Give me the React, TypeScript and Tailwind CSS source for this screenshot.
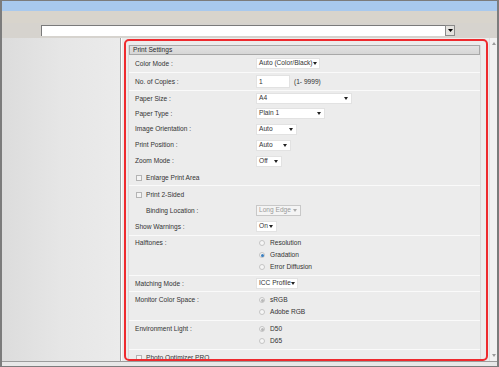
import React from "react";

const Arrow = ({ c = "#222" }: { c?: string }) => (
  <svg width="4" height="3" viewBox="0 0 4 3" className="shrink-0">
    <path d="M0 0h4L2 3z" fill={c} />
  </svg>
);

function Select({ cls, text, disabled }: { cls: string; text: string; disabled?: boolean }) {
  return (
    <div
      className={`${cls} h-[11px] flex items-center justify-between pl-[2px] pr-[3px] whitespace-nowrap ${
        disabled ? "bg-[#f4f4f4] border border-[#c8c8c8] text-[#9a9a9a]" : "bg-white border border-[#e2e2e2] text-[#333]"
      }`}
    >
      <span className="leading-none">{text}</span>
      <Arrow c={disabled ? "#aaa" : "#222"} />
    </div>
  );
}

function Radio({ checked, disabled }: { checked?: boolean; disabled?: boolean }) {
  return (
    <div className="w-[6px] h-[6px] rounded-full border border-[#c4c4c4] bg-[#f6f6f6] flex items-center justify-center">
      {checked && <div className={`w-[3px] h-[3px] rounded-full ${disabled ? "bg-[#b8b8b8]" : "bg-[#3a7fc0]"}`} />}
    </div>
  );
}

function RadioItem({ label, checked, disabled }: { label: string; checked?: boolean; disabled?: boolean }) {
  return (
    <div className="flex items-center h-[12px] gap-[2px] pl-[3px] whitespace-nowrap">
      <Radio checked={checked} disabled={disabled} />
      <span className="ml-[3px]">{label}</span>
    </div>
  );
}

const Check = () => <div className="w-[6px] h-[6px] border border-[#b4b4b4] bg-[#f4f4f4]" />;

const Sep = () => <div className="h-px bg-[#fafafa]" />;

function Row({ h, label, children, indent }: { h: string; label: string; children?: React.ReactNode; indent?: boolean }) {
  return (
    <div className={`flex items-center ${h} pl-[6px] whitespace-nowrap`}>
      <div className={`w-[121px] ${indent ? "pl-[11px]" : ""}`}>{label}</div>
      {children}
    </div>
  );
}

export default function App() {
  return (
    <div className="w-[499px] h-[367px] overflow-hidden bg-[#d6d3ce] border-l-2 border-r-2 border-t border-b border-[#7c7c7c] flex flex-col font-['Liberation_Sans',Arial,sans-serif] text-[6.6px] text-[#333]">
      <div className="h-[10px] bg-[#a8c9ee] shrink-0" />
      <div className="h-[12px] bg-[#d8d4cc] shrink-0" />
      <div className="h-[15px] shrink-0 flex items-start pt-[2px]">
        <div className="w-[39px]" />
        <div className="h-[11px] w-[404px] bg-white border-l border-t border-[#7a7a7a]" />
        <div className="h-[11px] w-[10px] bg-[#e4e2de] border border-[#8a8a8a] flex items-center justify-center">
          <svg width="5" height="3" viewBox="0 0 5 3">
            <path d="M0 0h5L2.5 3z" fill="#000" />
          </svg>
        </div>
      </div>
      <div className="h-[323px] shrink-0 flex">
        <div className="w-[119px] bg-gradient-to-r from-[#dcdcdc] via-[#e6e6e6] to-[#ebebeb] border-r border-[#a4a4a4]" />
        <div className="flex-1 relative bg-[#ececec] border-l border-white overflow-hidden pt-[7px] pl-[6px] pr-[5px]">
          <div className="w-[353px] border-l border-r border-[#dadada] bg-[#ececec]">
            <div className="h-[10px] bg-gradient-to-b from-[#e2e2e2] to-[#d6d6d6] border border-[#a8a8a8] flex items-center pl-[3px] text-[#2a2a2a]">
              Print Settings
            </div>
            <Row h="h-[17px]" label="Color Mode :">
              <Select cls="w-[64px]" text="Auto (Color/Black)" />
            </Row>
            <Sep />
            <Row h="h-[17px]" label="No. of Copies :">
              <div className="w-[34px] h-[13px] bg-white border border-[#e2e2e2] flex items-center pl-[2px]">1</div>
              <span className="ml-[4px]">(1- 9999)</span>
            </Row>
            <Sep />
            <Row h="h-[15px]" label="Paper Size :">
              <Select cls="w-[96px]" text="A4" />
            </Row>
            <Row h="h-[15px]" label="Paper Type :">
              <Select cls="w-[69px]" text="Plain 1" />
            </Row>
            <Row h="h-[16px]" label="Image Orientation :">
              <Select cls="w-[41px]" text="Auto" />
            </Row>
            <Row h="h-[16px]" label="Print Position :">
              <Select cls="w-[35px]" text="Auto" />
            </Row>
            <Row h="h-[16px]" label="Zoom Mode :">
              <Select cls="w-[26px]" text="Off" />
            </Row>
            <div className="flex items-center h-[16px] pl-[7px] pt-[2px] whitespace-nowrap">
              <Check />
              <span className="ml-[4px]">Enlarge Print Area</span>
            </div>
            <Sep />
            <div className="flex items-center h-[17px] pl-[7px] pt-[1px] whitespace-nowrap">
              <Check />
              <span className="ml-[4px]">Print 2-Sided</span>
            </div>
            <Row h="h-[15px]" label="Binding Location :" indent>
              <Select cls="w-[45px]" text="Long Edge" disabled />
            </Row>
            <Row h="h-[17px]" label="Show Warnings :">
              <Select cls="w-[21px]" text="On" />
            </Row>
            <Sep />
            <div className="flex pl-[6px] pt-[1px] h-[39px]">
              <div className="w-[121px] h-[12px] flex items-center">Halftones :</div>
              <div>
                <RadioItem label="Resolution" />
                <RadioItem label="Gradation" checked />
                <RadioItem label="Error Diffusion" />
              </div>
            </div>
            <Sep />
            <Row h="h-[15px]" label="Matching Mode :">
              <Select cls="w-[42px]" text="ICC Profile" />
            </Row>
            <Sep />
            <div className="flex pl-[6px] pt-[2px] h-[28px] whitespace-nowrap">
              <div className="w-[121px] h-[12px] flex items-center">Monitor Color Space :</div>
              <div>
                <RadioItem label="sRGB" checked disabled />
                <RadioItem label="Adobe RGB" />
              </div>
            </div>
            <Sep />
            <div className="flex pl-[6px] pt-[2px] h-[28px] whitespace-nowrap">
              <div className="w-[121px] h-[12px] flex items-center">Environment Light :</div>
              <div>
                <RadioItem label="D50" checked disabled />
                <RadioItem label="D65" />
              </div>
            </div>
            <Sep />
            <div className="flex items-center h-[15px] pl-[7px] whitespace-nowrap">
              <Check />
              <span className="ml-[4px]">Photo Optimizer PRO</span>
            </div>
          </div>
          <div className="absolute left-[2px] top-px w-[364px] h-[322px] border-2 border-[#ee2a2e] rounded-[5px] pointer-events-none" />
        </div>
        <div className="w-[8px] bg-[#f2f2f2] border-l border-[#e0e0e0] flex flex-col items-center justify-between py-[4px]">
          <svg width="4" height="3" viewBox="0 0 4 3">
            <path d="M0 3h4L2 0z" fill="#9a9a9a" />
          </svg>
          <svg width="4" height="3" viewBox="0 0 4 3">
            <path d="M0 0h4L2 3z" fill="#9a9a9a" />
          </svg>
        </div>
      </div>
      <div className="h-[5px] shrink-0 bg-[#e8e8e8] border-t border-[#9c9c9c]" />
    </div>
  );
}
